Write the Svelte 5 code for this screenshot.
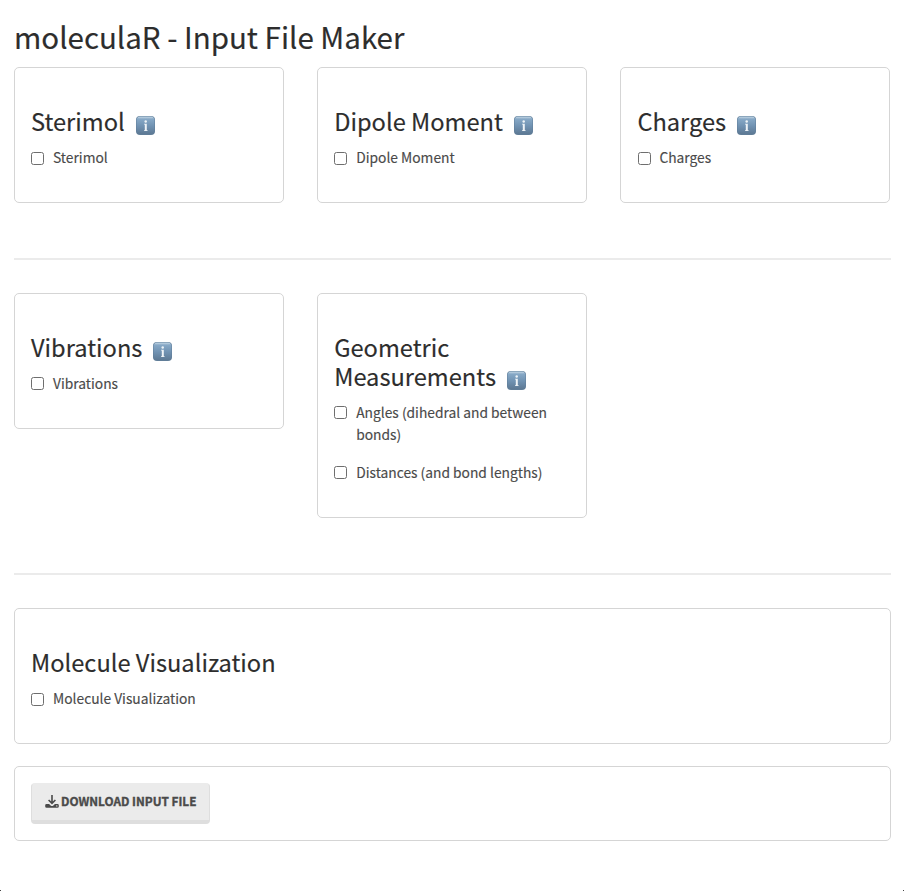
<script>
  const rows = [
    [
      { title: 'Sterimol', info: true, options: ['Sterimol'] },
      { title: 'Dipole Moment', info: true, options: ['Dipole Moment'] },
      { title: 'Charges', info: true, options: ['Charges'] }
    ],
    [
      { title: 'Vibrations', info: true, options: ['Vibrations'] },
      {
        title: 'Geometric Measurements',
        info: true,
        options: ['Angles (dihedral and between bonds)', 'Distances (and bond lengths)']
      }
    ],
    [{ title: 'Molecule Visualization', info: false, options: ['Molecule Visualization'] }]
  ];
</script>

<main>
  <h1>moleculaR - Input File Maker</h1>
  {#each rows as cards, i}
    {#if i > 0}<hr />{/if}
    <div class="row" class:single={cards.length === 1}>
      {#each cards as card}
        <section class="card">
          <h2>
            {card.title}{#if card.info}<svg class="info" viewBox="0 0 19 19" aria-label="info">
                <defs>
                  <linearGradient id="face" x1="0" y1="0" x2="0" y2="1">
                    <stop offset="0" stop-color="#a5c0d6" />
                    <stop offset="0.15" stop-color="#86a8c6" />
                    <stop offset="0.55" stop-color="#7092b2" />
                    <stop offset="1" stop-color="#5d7994" />
                  </linearGradient>
                </defs>
                <rect width="19" height="19" rx="4" fill="#607d98" />
                <rect x="0.5" y="0.5" width="18" height="17.5" rx="3.6" fill="url(#face)" />
                <rect x="2" y="0.8" width="15" height="1.4" rx="0.7" fill="#b9cfdf" opacity="0.7" />
                <circle cx="9.7" cy="5.5" r="1.25" fill="#eef3f7" />
                <path d="M8 7.8h2.8v6.4h0.8v0.8H8v-0.8h0.8V8.6H8z" fill="#eef3f7" />
              </svg>{/if}
          </h2>
          <div class="options">
            {#each card.options as option}
              <label><input type="checkbox" /><span>{option}</span></label>
            {/each}
          </div>
        </section>
      {/each}
    </div>
  {/each}
  <section class="card download">
    <button>
      <svg viewBox="0 0 14 13" aria-hidden="true">
        <path d="M7 0v8M3.6 5 7 8.3 10.4 5" fill="none" stroke="#4a4a4a" stroke-width="1.6" />
        <path
          d="M1.6 8.9h2.5l1.5 1.5q1.4 1.2 2.8 0l1.5-1.5h2.5q1.4 0 1.4 1.4v1.1q0 1.4-1.4 1.4H1.6q-1.4 0-1.4-1.4v-1.1q0-1.4 1.4-1.4z"
          fill="#4a4a4a"
        />
        <circle cx="11.8" cy="10.9" r="0.7" fill="#ebebeb" />
      </svg>
      <span>DOWNLOAD INPUT FILE</span>
    </button>
  </section>
  <i class="corner left"></i>
  <i class="corner right"></i>
</main>

<style>
  :global(body) {
    background: #fff;
  }
  main {
    position: relative;
    box-sizing: border-box;
    width: 904px;
    height: 891px;
    padding: 16px 13px 0 14px;
    overflow: hidden;
    font-family: 'Noto Sans CJK SC', 'Noto Sans', sans-serif;
    color: #2d2d2d;
    -webkit-text-stroke: 0.15px currentColor;
  }
  h1 {
    margin: 0 0 11px;
    font-size: 29.5px;
    line-height: 40px;
    font-weight: 400;
    white-space: nowrap;
  }
  .row {
    display: grid;
    grid-template-columns: repeat(3, 270px);
    gap: 33.2px;
    align-items: start;
  }
  .row.single {
    grid-template-columns: 1fr;
  }
  .card {
    box-sizing: border-box;
    border: 1px solid #d5d5d5;
    border-radius: 5px;
    padding: 39px 16px 34px;
  }
  hr {
    height: 2px;
    margin: 55px 0 33px;
    border: 0;
    background: #ebebeb;
  }
  h2 {
    margin: 0 0 10px;
    font-size: 23.65px;
    line-height: 29px;
    font-weight: 400;
  }
  .info {
    width: 19px;
    height: 19px;
    margin-left: 11px;
    vertical-align: -4px;
  }
  .options {
    display: flex;
    flex-direction: column;
    gap: 16px;
  }
  label {
    display: flex;
    gap: 9px;
    font-size: 13.8px;
    line-height: 22px;
    color: #4a4a4a;
  }
  input {
    flex: none;
    appearance: none;
    box-sizing: border-box;
    width: 13px;
    height: 13px;
    margin: 6px -0.3px 0 0.3px;
    border: 1px solid #6e6e6e;
    border-radius: 2.5px;
    background: #fff;
  }
  .row:nth-of-type(2) input {
    margin-top: 5px;
  }
  .download {
    height: 75px;
    margin-top: 22px;
    padding: 16px;
  }
  button {
    display: flex;
    align-items: center;
    gap: 2px;
    box-sizing: border-box;
    width: 179px;
    height: 41px;
    padding: 0 0 2px 13px;
    border: 1px solid #dedede;
    border-top-color: #ebebeb;
    border-bottom-width: 4px;
    border-radius: 4px;
    background: #ebebeb;
    color: #4a4a4a;
    font: 700 11.8px/20px 'Noto Sans CJK SC', 'Noto Sans', sans-serif;
    white-space: nowrap;
    -webkit-text-stroke: 0.35px currentColor;
  }
  button svg {
    width: 14px;
    height: 13px;
  }
  .corner {
    position: absolute;
    bottom: 0;
    width: 1px;
    height: 1px;
    background: #444;
  }
  .left {
    left: 0;
  }
  .right {
    right: 0;
  }
</style>
